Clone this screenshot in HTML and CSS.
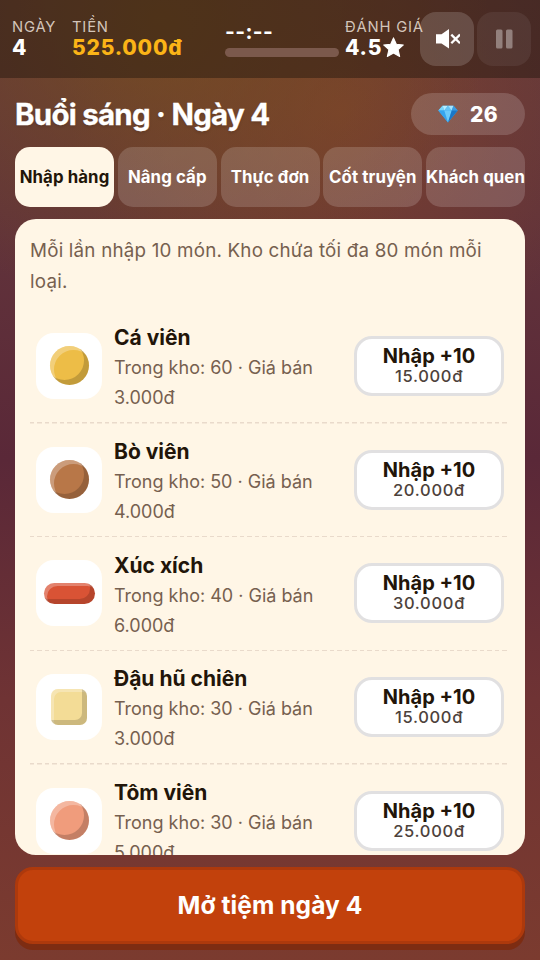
FILE: index.html
```html
<!DOCTYPE html>
<html lang="vi">
<head>
<meta charset="utf-8">
<meta name="viewport" content="width=device-width, initial-scale=1">
<title>Buổi sáng · Ngày 4</title>
<link rel="stylesheet" href="styles.css">
</head>
<body>
<header class="hud">
  <div class="stat stat-day"><span class="label">NGÀY</span><b class="value">4</b></div>
  <div class="stat stat-money"><span class="label">TIỀN</span><b class="value gold">525.000đ</b></div>
  <div class="clock"><b class="time">--:--</b><div class="bar"></div></div>
  <div class="stat stat-rating"><span class="label">ĐÁNH GIÁ</span><b class="value">4.5<svg class="star" viewBox="0 0 20 20"><path d="M10 .8 12.7 6.9 19.4 7.6 14.4 12 15.9 18.6 10 15.2 4.1 18.6 5.6 12 .6 7.6 7.3 6.9Z" fill="#fff" stroke="#fff" stroke-width="1" stroke-linejoin="round"/></svg></b></div>
  <button class="icon-btn" aria-label="Âm thanh"><svg width="26" height="24" viewBox="0 0 26 24"><path d="M2 7.3H7.5L15 2V21.5L7.5 16.5H2Z" fill="#fff"/><path d="M17.3 7.6 26 16.3M26 7.6 17.3 16.3" stroke="#fff" stroke-width="2.3" stroke-linecap="butt"/></svg></button>
  <button class="icon-btn off" aria-label="Tạm dừng"><svg width="18" height="20" viewBox="0 0 18 20"><rect x="1" y=".5" width="6.5" height="19" rx="1.5" fill="#fff"/><rect x="11" y=".5" width="6.5" height="19" rx="1.5" fill="#fff"/></svg></button>
</header>
<main class="shop">
  <div class="heading">
    <h1>Buổi sáng · Ngày 4</h1>
    <div class="gems"><svg width="20" height="18" viewBox="0 0 20 18"><path d="M4.5.8H15.5L19.7 5.5 10 17.4.3 5.5Z" fill="#38a7ee"/><path d="M4.5.8 6.3 5.5H.3Z" fill="#79d5fb"/><path d="M4.5.8H10L6.3 5.5Z" fill="#b5edff"/><path d="M10 .8 13.7 5.5H6.3Z" fill="#65c4f6"/><path d="M10 .8H15.5L13.7 5.5Z" fill="#a5e4ff"/><path d="M15.5.8 19.7 5.5H13.7Z" fill="#3c9be0"/><path d="M.3 5.5H6.3L10 17.4Z" fill="#36a4ed"/><path d="M6.3 5.5H13.7L10 17.4Z" fill="#6ccafa"/><path d="M13.7 5.5H19.7L10 17.4Z" fill="#1977c8"/></svg><b>26</b></div>
  </div>
  <nav class="tabs">
    <button class="tab active">Nhập hàng</button>
    <button class="tab">Nâng cấp</button>
    <button class="tab">Thực đơn</button>
    <button class="tab">Cốt truyện</button>
    <button class="tab">Khách quen</button>
  </nav>
  <section class="panel">
    <p class="note">Mỗi lần nhập 10 món. Kho chứa tối đa 80 món mỗi loại.</p>
    <article class="row">
      <div class="thumb"><i class="food ball fish"></i></div>
      <div class="info"><h2>Cá viên</h2><p>Trong kho: 60 · Giá bán 3.000đ</p></div>
      <button class="buy"><b>Nhập +10</b><span>15.000đ</span></button>
    </article>
    <article class="row">
      <div class="thumb"><i class="food ball beef"></i></div>
      <div class="info"><h2>Bò viên</h2><p>Trong kho: 50 · Giá bán 4.000đ</p></div>
      <button class="buy"><b>Nhập +10</b><span>20.000đ</span></button>
    </article>
    <article class="row">
      <div class="thumb"><i class="food sausage"></i></div>
      <div class="info"><h2>Xúc xích</h2><p>Trong kho: 40 · Giá bán 6.000đ</p></div>
      <button class="buy"><b>Nhập +10</b><span>30.000đ</span></button>
    </article>
    <article class="row">
      <div class="thumb"><i class="food tofu"></i></div>
      <div class="info"><h2>Đậu hũ chiên</h2><p>Trong kho: 30 · Giá bán 3.000đ</p></div>
      <button class="buy"><b>Nhập +10</b><span>15.000đ</span></button>
    </article>
    <article class="row">
      <div class="thumb"><i class="food ball shrimp"></i></div>
      <div class="info"><h2>Tôm viên</h2><p>Trong kho: 30 · Giá bán 5.000đ</p></div>
      <button class="buy"><b>Nhập +10</b><span>25.000đ</span></button>
    </article>
  </section>
  <button class="open">Mở tiệm ngày 4</button>
</main>
</body>
</html>
```
FILE: styles.css
```css
* { box-sizing: border-box; margin: 0; padding: 0; }
body {
  width: 540px;
  height: 960px;
  overflow: hidden;
  font-family: Inter, "Liberation Sans", sans-serif;
  color: #fff;
  background:
    radial-gradient(ellipse 330px 290px at 160px 20px, rgba(118, 78, 30, .8), rgba(118, 78, 30, 0)),
    radial-gradient(ellipse 270px 260px at 340px 110px, rgba(130, 68, 42, .75), rgba(130, 68, 42, 0)),
    linear-gradient(180deg, #643a3c 0, #62343b 210px, #5a2838 460px, #6f3334 700px, #7b3b2f 960px);
}
button { font: inherit; color: inherit; border: 0; }
.hud { display: flex; height: 78px; padding: 0 9px 0 12px; background: rgba(34, 22, 14, .45); }
.stat { padding-top: 18px; white-space: nowrap; }
.stat-day { width: 60px; }
.stat-money { width: 153px; }
.stat-rating { width: 75px; }
.label { display: block; font-size: 14.8px; line-height: 18px; letter-spacing: .8px; color: #d3c5ba; }
.value { display: flex; align-items: center; font-size: 21px; line-height: 24px; font-weight: 800; letter-spacing: .8px; }
.gold { color: #fbb417; }
.star { width: 21px; height: 21px; margin: 0 0 2px 1px; }
.clock { width: 120px; padding-top: 20px; }
.time { display: block; font-size: 21px; line-height: 24px; letter-spacing: .4px; }
.bar { width: 114px; height: 9px; margin-top: 4px; border-radius: 5px; background: #7b594c; }
.icon-btn { flex: none; width: 54px; height: 54px; margin-top: 12px; border-radius: 16px; background: rgba(255, 255, 255, .16); display: grid; place-items: center; }
.icon-btn + .icon-btn { margin-left: 3px; }
.icon-btn.off { opacity: .4; }
.shop { height: 882px; padding: 15px 15px 15px; display: flex; flex-direction: column; }
.heading { display: flex; justify-content: space-between; align-items: center; height: 42px; }
h1 { font-size: 29.5px; line-height: 42px; font-weight: 700; letter-spacing: -.75px; text-shadow: 0 2px 3px rgba(0, 0, 0, .12); -webkit-text-stroke: .3px #fff; }
.gems { display: flex; align-items: center; justify-content: center; gap: 12px; width: 114px; height: 42px; border-radius: 21px; background: rgba(255, 255, 255, .16); font-size: 21px; }
.gems b { font-weight: 800; letter-spacing: .3px; }
.tabs { display: grid; grid-template-columns: repeat(5, 99px); justify-content: space-between; height: 60px; margin-top: 12px; }
.tab { border-radius: 15px; background: rgba(255, 255, 255, .16); font-size: 16.8px; font-weight: 700; letter-spacing: .1px; white-space: nowrap; display: flex; align-items: center; justify-content: center; }
.tab.active { background: #fff6e6; color: #221509; }
.panel { height: 636px; margin-top: 12px; padding: 15px 15px 0; border-radius: 21px; background: #fff6e6; color: #221509; overflow: hidden; }
.note { font-size: 18.8px; line-height: 31px; letter-spacing: .2px; color: #76604f; height: 76px; padding-top: 1px; }
.row { display: flex; align-items: center; height: 113.7px; padding: 0 6px 2px; background: repeating-linear-gradient(90deg, #e9dacb 0 4.5px, transparent 4.5px 7.5px) 0 100% / 100% 1.5px no-repeat; }
.thumb { flex: none; width: 66px; height: 66px; border-radius: 18px; background: #fff; display: grid; place-items: center; }
.info { width: 228px; margin-left: 12px; margin-right: 12px; padding-top: 4px; }
h2 { font-size: 21px; line-height: 31px; font-weight: 700; }
.info p { width: 215px; font-size: 18px; line-height: 30px; color: #76604f; }
.buy { flex: none; width: 150px; height: 60px; border: 3px solid #e1e0e1; border-radius: 18px; background: #fff; text-align: center; color: #221509; }
.buy b { display: block; font-size: 20px; line-height: 22px; margin-top: -1px; }
.buy span { display: block; font-size: 16.5px; line-height: 19px; font-weight: 500; letter-spacing: .7px; color: #4d423b; }
.food { display: block; }
.ball { width: 39px; height: 39px; border-radius: 50%; box-shadow: inset -5px -5px 0 rgba(0, 0, 0, .18), inset 4px 4px 0 rgba(255, 255, 255, .28); }
.fish { background: #edbd47; }
.beef { background: #b87748; }
.shrimp { background: #f09c7c; }
.sausage { width: 51px; height: 21px; border-radius: 11px; background: #d95335; box-shadow: inset -5px -5px 0 rgba(0, 0, 0, .16), inset 3px 3px 0 rgba(255, 255, 255, .28); }
.tofu { width: 36px; height: 36px; border-radius: 7px; background: #f3dc96; box-shadow: inset -5px -5px 0 rgba(0, 0, 0, .16), inset 3px 3px 0 rgba(255, 255, 255, .28); }
.open { flex: none; width: 510px; height: 77px; margin-top: 12px; padding-bottom: 2px; border: 3px solid #ad390c; border-radius: 18px; background: #c2410c; box-shadow: 0 6px 0 #7d2c12; font-size: 24.5px; font-weight: 700; letter-spacing: .1px; }
```
